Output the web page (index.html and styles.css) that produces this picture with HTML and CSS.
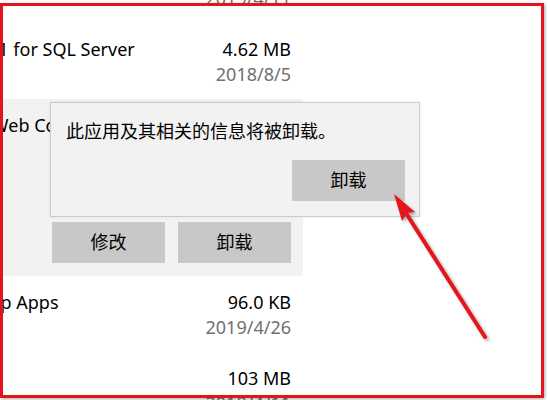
FILE: index.html
```html
<!DOCTYPE html>
<html lang="zh-CN">
<head>
<meta charset="utf-8">
<title>应用和功能</title>
<link rel="stylesheet" href="styles.css">
</head>
<body>
<div class="page">
  <div class="list">
    <div class="row">
      <div class="row-main">
        <div class="name">Microsoft .NET Framework 4.7.2 Targeting Pack</div>
        <div class="meta"><div class="size">38.1 MB</div><div class="date">2019/4/11</div></div>
      </div>
    </div>
    <div class="row">
      <div class="row-main">
        <div class="name">Microsoft ODBC Driver 11 for SQL Server</div>
        <div class="meta"><div class="size">4.62 MB</div><div class="date">2018/8/5</div></div>
      </div>
    </div>
    <div class="row selected">
      <div class="row-main">
        <div class="name">Microsoft® Office 2003 Web Components</div>
        <div class="meta"><div class="size">15.9 MB</div><div class="date">2018/8/5</div></div>
      </div>
      <div class="actions">
        <button class="btn">修改</button>
        <button class="btn">卸载</button>
      </div>
    </div>
    <div class="row">
      <div class="row-main">
        <div class="name">Windows SDK for Desktop Apps</div>
        <div class="meta"><div class="size">96.0 KB</div><div class="date">2019/4/26</div></div>
      </div>
    </div>
    <div class="row">
      <div class="row-main">
        <div class="name">Microsoft Silverlight</div>
        <div class="meta"><div class="size">103 MB</div><div class="date">2019/4/11</div></div>
      </div>
    </div>
  </div>

  <div class="flyout">
    <div class="flyout-text">此应用及其相关的信息将被卸载。</div>
    <div class="flyout-actions">
      <button class="btn">卸载</button>
    </div>
  </div>

  <div class="frame"></div>

  <svg class="arrow" width="550" height="400" viewBox="0 0 550 400">
    <defs>
      <filter id="sh" x="-20%" y="-20%" width="140%" height="140%">
        <feDropShadow dx="2" dy="2" stdDeviation="1.5" flood-color="#000" flood-opacity="0.35"/>
      </filter>
    </defs>
    <g filter="url(#sh)">
      <line x1="485" y1="337" x2="404" y2="210" stroke="#e3141b" stroke-width="4" stroke-linecap="round"/>
      <polygon points="394,194 415,212 407,213 402,221 " fill="#e3141b"/>
    </g>
  </svg>
</div>
</body>
</html>
```

FILE: styles.css
```css
html, body {
  margin: 0;
  padding: 0;
  background: #ffffff;
}

.page {
  position: relative;
  width: 550px;
  height: 400px;
  overflow: hidden;
  background: #ffffff;
  font-family: "Noto Sans", "Noto Sans CJK SC", sans-serif;
  font-size: 18px;
  color: #000000;
}

.list {
  width: 543px;
  margin-left: -240px;
  margin-top: -53px;
}

.row {
  padding: 14px 12px 13px 32px;
}

.row.selected {
  background: #f2f2f2;
}

.row-main {
  display: flex;
  justify-content: space-between;
}

.name {
  white-space: nowrap;
  line-height: 24px;
}

.meta {
  text-align: right;
  white-space: nowrap;
}

.size {
  line-height: 24px;
}

.date {
  margin-top: 1px;
  line-height: 24px;
  color: #707070;
}

.actions {
  display: flex;
  justify-content: flex-end;
  gap: 13px;
  margin-top: 60px;
}

.btn {
  width: 113px;
  height: 41px;
  margin: 0;
  padding: 0;
  border: none;
  background: #c8c8c8;
  font-family: "Noto Sans", "Noto Sans CJK SC", sans-serif;
  font-size: 18px;
  color: #000000;
  line-height: 41px;
}

.flyout {
  position: absolute;
  left: 50px;
  top: 102px;
  width: 370px;
  box-sizing: border-box;
  padding: 16px 14px 15px 15px;
  background: #f2f2f2;
  border: 1px solid #cccccc;
  box-shadow: 0 0 3px rgba(0, 0, 0, 0.08);
}

.flyout-text {
  line-height: 24px;
  white-space: nowrap;
}

.flyout-actions {
  display: flex;
  justify-content: flex-end;
  margin-top: 17px;
}

.frame {
  position: absolute;
  left: 0;
  top: 3px;
  width: 544px;
  height: 395px;
  box-sizing: border-box;
  border: 3px solid #e3141b;
  box-shadow: 1px 1px 3px rgba(0, 0, 0, 0.35);
}

.arrow {
  position: absolute;
  left: 0;
  top: 0;
}
```
